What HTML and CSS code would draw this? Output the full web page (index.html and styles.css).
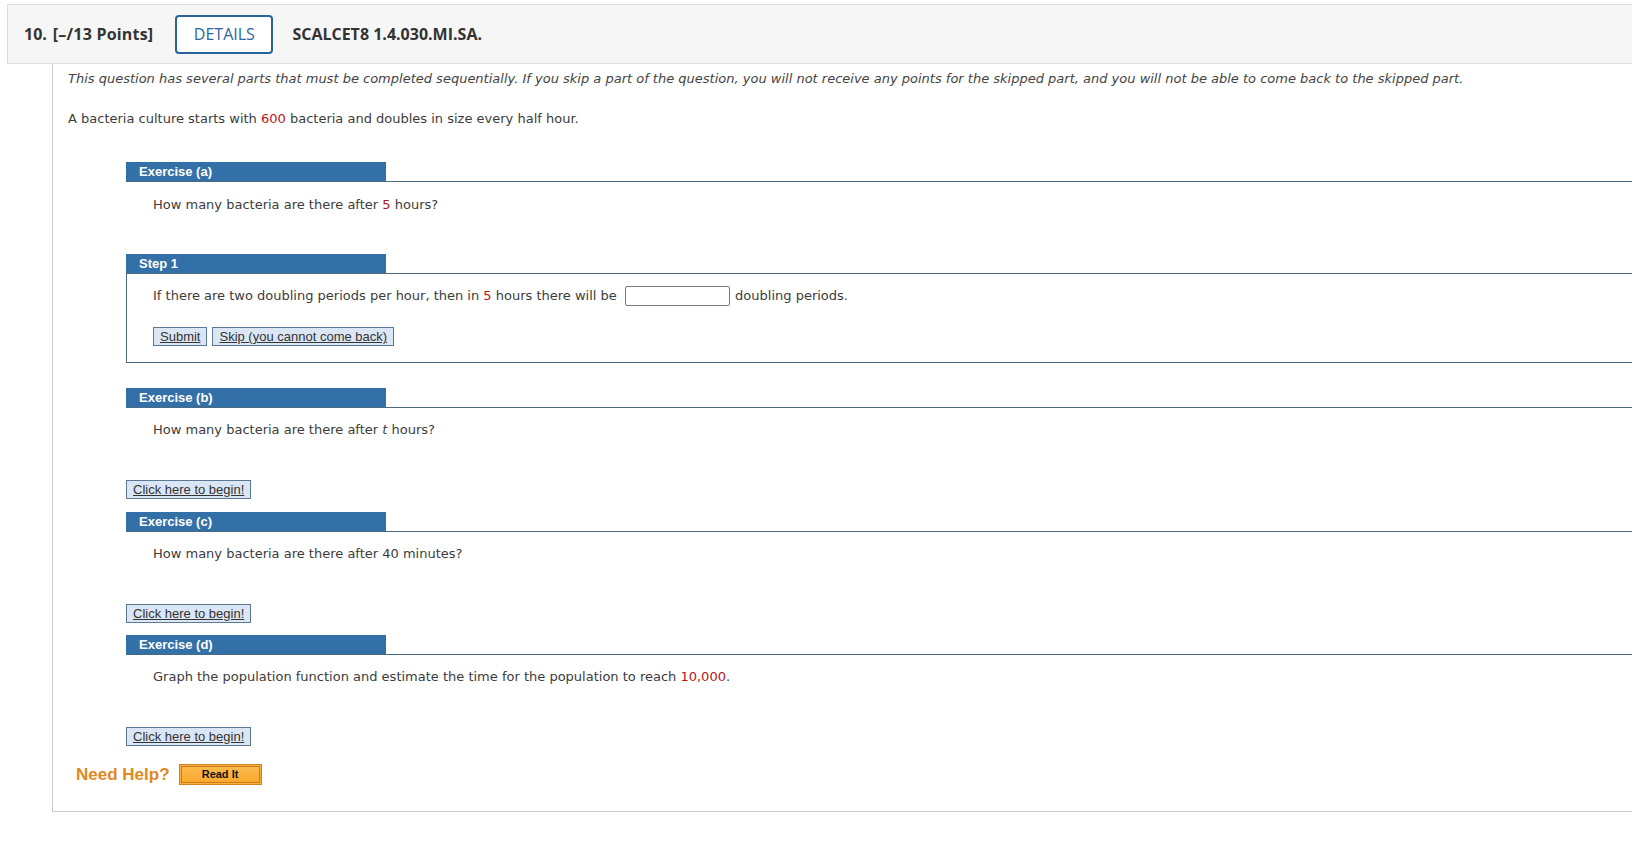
FILE: index.html
```html
<!DOCTYPE html>
<html lang="en">
<head>
<meta charset="utf-8">
<title>SCALCET8 1.4.030.MI.SA.</title>
<link rel="stylesheet" href="styles.css">
</head>
<body>
<div class="question">
  <div class="qheader">
    <span class="qnum">10.</span>
    <span class="qpts">[–/13 Points]</span>
    <button class="details">DETAILS</button>
    <span class="qcode">SCALCET8 1.4.030.MI.SA.</span>
  </div>
  <div class="qbody">
    <p class="note">This question has several parts that must be completed sequentially. If you skip a part of the question, you will not receive any points for the skipped part, and you will not be able to come back to the skipped part.</p>
    <p class="intro">A bacteria culture starts with <span class="red">600</span> bacteria and doubles in size every half hour.</p>

    <div class="exercises">
      <section class="ex">
        <div class="ex-head"><span class="ex-title">Exercise (a)</span></div>
        <p class="ex-text">How many bacteria are there after <span class="red">5</span> hours?</p>
      </section>

      <section class="step">
        <div class="ex-head"><span class="ex-title">Step 1</span></div>
        <div class="step-box">
          <p class="step-text">If there are two doubling periods per hour, then in <span class="red">5</span> hours there will be <input class="answer" type="text"> doubling periods.</p>
          <div class="step-actions">
            <button class="btn">Submit</button>
            <button class="btn">Skip (you cannot come back)</button>
          </div>
        </div>
      </section>

      <section class="ex ex-next">
        <div class="ex-head"><span class="ex-title">Exercise (b)</span></div>
        <p class="ex-text">How many bacteria are there after <i>t</i> hours?</p>
      </section>
      <div class="begin"><button class="btn">Click here to begin!</button></div>

      <section class="ex ex-after">
        <div class="ex-head"><span class="ex-title">Exercise (c)</span></div>
        <p class="ex-text">How many bacteria are there after 40 minutes?</p>
      </section>
      <div class="begin"><button class="btn">Click here to begin!</button></div>

      <section class="ex ex-after ex-last">
        <div class="ex-head"><span class="ex-title">Exercise (d)</span></div>
        <p class="ex-text">Graph the population function and estimate the time for the population to reach <span class="red">10,000</span>.</p>
      </section>
      <div class="begin"><button class="btn">Click here to begin!</button></div>
    </div>

    <div class="help">
      <span class="help-label">Need Help?</span>
      <button class="readit"><span class="readit-inner">Read It</span></button>
    </div>
  </div>
</div>
</body>
</html>
```

FILE: styles.css
```css
html, body {
  margin: 0;
  padding: 0;
  background: #ffffff;
  overflow: hidden;
}

body {
  font-family: Verdana, "DejaVu Sans", sans-serif;
  font-size: 13px;
  color: #3c3c3c;
}

.question {
  margin: 4px 0 0 7px;
}

.qheader {
  display: flex;
  align-items: center;
  height: 58px;
  padding-left: 16px;
  background: #f6f6f6;
  border: 1px solid #dcdcdc;
  border-right: none;
  font-family: "Open Sans", "Liberation Sans", sans-serif;
  font-size: 16px;
  color: #333333;
}

.qnum {
  font-weight: 700;
  margin-right: 6px;
}

.qpts {
  font-weight: 700;
  letter-spacing: 0.2px;
}

.details {
  margin-left: 22px;
  width: 98px;
  height: 39px;
  padding: 0;
  border: 2px solid #28639a;
  border-radius: 4px;
  background: #ffffff;
  color: #2a67a0;
  font-family: "Open Sans", "Liberation Sans", sans-serif;
  font-size: 16px;
}

.qcode {
  margin-left: 19px;
  font-weight: 700;
}

.qbody {
  margin-left: 45px;
  padding: 6px 0 26px 15px;
  border-left: 1px solid #cccccc;
  border-bottom: 1px solid #cccccc;
}

.note {
  margin: 0;
  line-height: 18px;
  font-style: italic;
  white-space: nowrap;
  color: #444444;
}

.intro {
  margin: 22px 0 0;
  line-height: 18px;
}

.red {
  color: #b5161c;
}

.exercises {
  margin: 34px 0 0 58px;
}

.ex-head {
  display: flex;
  border-bottom: 1px solid #4a6a80;
}

.ex-title {
  width: 260px;
  height: 19px;
  line-height: 19px;
  padding-left: 13px;
  box-sizing: border-box;
  background: #3470a8;
  color: #ffffff;
  font-family: Arial, "Liberation Sans", sans-serif;
  font-weight: bold;
  font-size: 13px;
}

.ex-text {
  margin: 14px 0 0;
  padding-left: 27px;
  line-height: 18px;
}

.ex-next .ex-text,
.ex-after .ex-text {
  margin-top: 13px;
}

.step {
  margin-top: 40px;
}

.step-box {
  padding: 12px 0 16px 26px;
  border: 1px solid #4a6a80;
  border-top: none;
  border-right: none;
}

.step-text {
  margin: 0;
  line-height: 20px;
}

.answer {
  width: 105px;
  height: 20px;
  box-sizing: border-box;
  margin: 0 1px 0 4px;
  padding: 0 3px;
  border: 1px solid #7a7a7a;
  border-radius: 2px;
  vertical-align: top;
  background: #ffffff;
}

.step-actions {
  display: flex;
  gap: 5px;
  margin-top: 21px;
}

.btn {
  height: 19px;
  padding: 0 6px;
  border: 1px solid #5b7894;
  background: #dbe6f4;
  color: #333333;
  font-family: Arial, "Liberation Sans", sans-serif;
  font-size: 13px;
  line-height: 17px;
  text-decoration: underline;
}

.ex-next {
  margin-top: 25px;
}

.begin {
  margin-top: 41px;
}

.ex-after {
  margin-top: 13px;
}

.ex-last {
  margin-top: 12px;
}

.help {
  display: flex;
  align-items: center;
  margin: 18px 0 0 8px;
  height: 21px;
}

.help-label {
  font-family: Arial, "Liberation Sans", sans-serif;
  font-weight: bold;
  font-size: 17px;
  color: #e0891e;
}

.readit {
  margin-left: 9px;
  width: 83px;
  height: 21px;
  padding: 1px;
  border: 1px solid #d0801c;
  background: #fbb040;
  box-sizing: border-box;
  display: flex;
}

.readit-inner {
  flex: 1;
  border: 1px solid #c97a18;
  background: linear-gradient(#fdbb4c, #f9a92e);
  font-family: Arial, "Liberation Sans", sans-serif;
  font-weight: bold;
  font-size: 11px;
  line-height: 15px;
  color: #111111;
  text-align: center;
}
```
